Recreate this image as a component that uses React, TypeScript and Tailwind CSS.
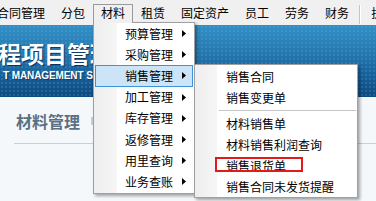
import React from 'react';

const topItems = ['合同管理', '分包', '材料', '租赁', '固定资产', '员工', '劳务', '财务'];

const mainItems = ['预算管理', '采购管理', '销售管理', '加工管理', '库存管理', '返修管理', '用里查询', '业务查账'];

const subItems: (string | null)[] = ['销售合同', '销售变更单', null, '材料销售单', '材料销售利润查询', '销售退货单', '销售合同未发货提醒'];

const cjk = "font-['Noto_Sans_CJK_SC','Noto_Sans',sans-serif]";

function Arrow() {
  return (
    <svg width="4" height="7" viewBox="0 0 4 7" aria-hidden>
      <polygon points="0,0 4,3.5 0,7" fill="#000" />
    </svg>
  );
}

export default function App() {
  return (
    <div className={`relative w-[376px] h-[201px] overflow-hidden bg-[#f5f8fb] ${cjk}`}>
      {/* top menu bar */}
      <div className="flex h-[25px] pt-[4px] bg-[#f0f0f0] ml-[-11px] text-[12px] text-black whitespace-nowrap">
        {topItems.map((t) => (
          <div
            key={t}
            className={
              'h-[18px] leading-[16px] px-[7px] border ' +
              (t === '材料' ? 'border-[#9a9a9a] border-b-0 h-[19px] bg-[#f0f0f0] relative z-20' : 'border-transparent')
            }
          >
            {t}
          </div>
        ))}
        <div className="flex mx-[2px] my-[1px]">
          <div className="w-px bg-[#c4c4c4]" />
          <div className="w-px bg-white" />
        </div>
        <div className="h-[18px] leading-[16px] px-[7px] border border-transparent">执</div>
      </div>

      {/* banner */}
      <div className="relative h-[72px] bg-[linear-gradient(180deg,#3190c7_0%,#2577ae_40%,#17609a_70%,#0d4a7d_100%)] overflow-hidden">
        <div className="absolute inset-0 opacity-50 bg-[radial-gradient(circle,rgba(110,175,225,0.45)_0.8px,transparent_1.2px)] bg-[length:4px_4px]" />
        <div className="relative pt-[16px] ml-[-2px]">
          <div className="text-[23px] leading-[24px] font-bold text-white [text-shadow:1px_1px_1px_rgba(0,20,60,0.7)] whitespace-nowrap">
            程项目管理
          </div>
          <div className="mt-[6px] ml-[5px] text-[10px] leading-[10px] font-bold text-white font-['Liberation_Sans',sans-serif] tracking-[-0.1px] whitespace-nowrap [text-shadow:1px_1px_1px_rgba(0,20,60,0.6)]">
            T MANAGEMENT S
          </div>
        </div>
      </div>

      {/* content */}
      <div className="pt-[14px]">
        <div className="flex items-center pl-[16px] h-[20px]">
          <span className="text-[16px] leading-[20px] font-bold text-[#5c7083]">材料管理</span>
          <span className="ml-[11px] w-[2px] h-[8px] bg-[#c7ced5]" />
        </div>
        <div className="ml-[14px] mt-[12px] h-px bg-[#c9cfd5]" />
      </div>

      {/* dropdown menu */}
      <div className="absolute left-[93px] top-[22px] w-[102px] z-10 border border-[#a0a0a0] px-[1px] text-[12px] text-black shadow-[2px_2px_3px_rgba(0,0,0,0.35)] bg-[linear-gradient(90deg,#eeeeee_0px,#f6f6f6_23px,#ffffff_23px)]">
        {mainItems.map((t) => (
          <div
            key={t}
            className={
              'flex items-center justify-between h-[21.2px] pl-[29px] pr-[6px] border ' +
              (t === '销售管理' ? 'bg-[#cce4f7] border-[#3d94de]' : 'border-transparent')
            }
          >
            <span className="leading-[16px]">{t}</span>
            <Arrow />
          </div>
        ))}
      </div>

      {/* sub menu */}
      <div className="absolute left-[194px] top-[64px] w-[164px] z-30 border border-[#a0a0a0] px-[1px] pt-[1px] text-[12px] text-black shadow-[2px_2px_3px_rgba(0,0,0,0.35)] bg-[linear-gradient(90deg,#eeeeee_0px,#f6f6f6_22px,#ffffff_22px)]">
        {subItems.map((t, i) =>
          t === null ? (
            <div key={i} className="flex items-center h-[5px]">
              <div className="ml-[23px] flex-1 h-px bg-[#c4c4c4]" />
            </div>
          ) : (
            <div key={t} className="flex items-center h-[21px] pl-[29px] border border-transparent whitespace-nowrap">
              <span className="leading-[16px]">{t}</span>
            </div>
          )
        )}
      </div>

      {/* red annotation box */}
      <div className="absolute left-[215px] top-[157px] w-[88px] h-[15px] z-40 border-2 border-[#e3191c]" />
    </div>
  );
}
